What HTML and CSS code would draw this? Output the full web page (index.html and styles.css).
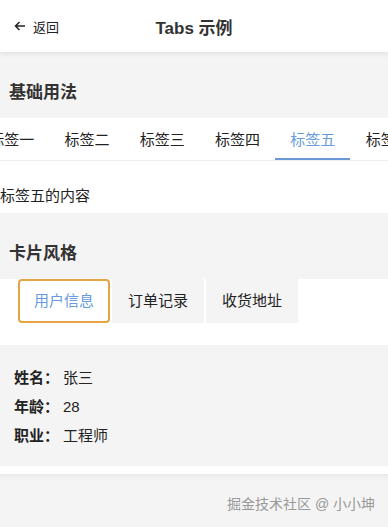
FILE: index.html
```html
<!DOCTYPE html>
<html>
<head>
    <meta charset="utf-8">
    <title>Tabs 示例</title>
    <link rel="stylesheet" href="styles.css">
</head>
<body>
    <div class="header">
        <div class="back">
            <svg width="12" height="10" viewBox="0 0 12 10"><path d="M11 5H1.5M5.5 1L1.5 5l4 4" fill="none" stroke="#222" stroke-width="1.5"/></svg>
            <span>返回</span>
        </div>
        <div class="title">Tabs 示例</div>
    </div>

    <div class="section-title">基础用法</div>
    <div class="tabs">
        <div class="tab-list">
            <div class="tab">标签一</div>
            <div class="tab">标签二</div>
            <div class="tab">标签三</div>
            <div class="tab">标签四</div>
            <div class="tab active">标签五</div>
            <div class="tab">标签六</div>
        </div>
    </div>
    <div class="tab-content">标签五的内容</div>

    <div class="section-title">卡片风格</div>
    <div class="card-tabs">
        <div class="card-tab active">用户信息</div>
        <div class="card-tab">订单记录</div>
        <div class="card-tab">收货地址</div>
    </div>
    <div class="card-panel">
        <div class="row"><span class="label">姓名：</span>张三</div>
        <div class="row"><span class="label">年龄：</span>28</div>
        <div class="row"><span class="label">职业：</span>工程师</div>
    </div>
    <div class="gap"></div>
    <div class="footer">掘金技术社区 @ 小小坤</div>
</body>
</html>
```

FILE: styles.css
```css
body { margin: 0; background: #f4f4f4; font-family: "Liberation Sans", "Noto Sans CJK SC", sans-serif; color: #222; font-size: 15px; overflow: hidden; }
.header { height: 52px; background: #fff; position: relative; display: flex; align-items: center; justify-content: center; box-shadow: 0 2px 5px rgba(0,0,0,0.08); z-index: 1; }
.back { position: absolute; left: 14px; top: 0; bottom: 0; display: flex; align-items: center; gap: 7px; font-size: 13px; color: #222; }
.title { font-size: 17px; font-weight: bold; color: #333; }
.section-title { padding: 30px 9px 14px; line-height: 22px; font-size: 17px; font-weight: bold; color: #333; }
.tabs { background: #fff; overflow: hidden; border-bottom: 1px solid #eee; }
.tab-list { display: flex; margin-left: -26px; }
.tab { flex: 0 0 75.3px; text-align: center; height: 42px; line-height: 43px; box-sizing: border-box; color: #222; white-space: nowrap; }
.tab.active { color: #6a9bdc; border-bottom: 2px solid #6b98d6; }
.tab-content { background: #fff; padding: 25px 0 7px; line-height: 20px; }
.card-tabs { background: #fff; display: flex; gap: 2px; padding: 0 0 22px 18px; }
.card-tab { width: 92px; height: 44px; line-height: 44px; text-align: center; background: #f4f4f4; box-sizing: border-box; }
.card-tab.active { background: #fff; border: 2px solid #e3a545; border-radius: 4px; line-height: 40px; color: #6a9bdc; }
.card-panel { background: #f4f4f4; padding: 18px 14px 16px; }
.row { line-height: 29px; }
.label { font-weight: bold; margin-right: 4px; }
.gap { height: 8px; background: #fff; }
.footer { box-shadow: inset 0 6px 6px -4px rgba(0,0,0,0.06); text-align: right; padding: 20px 13px 0; color: #999; font-size: 14px; line-height: 20px; }
```
